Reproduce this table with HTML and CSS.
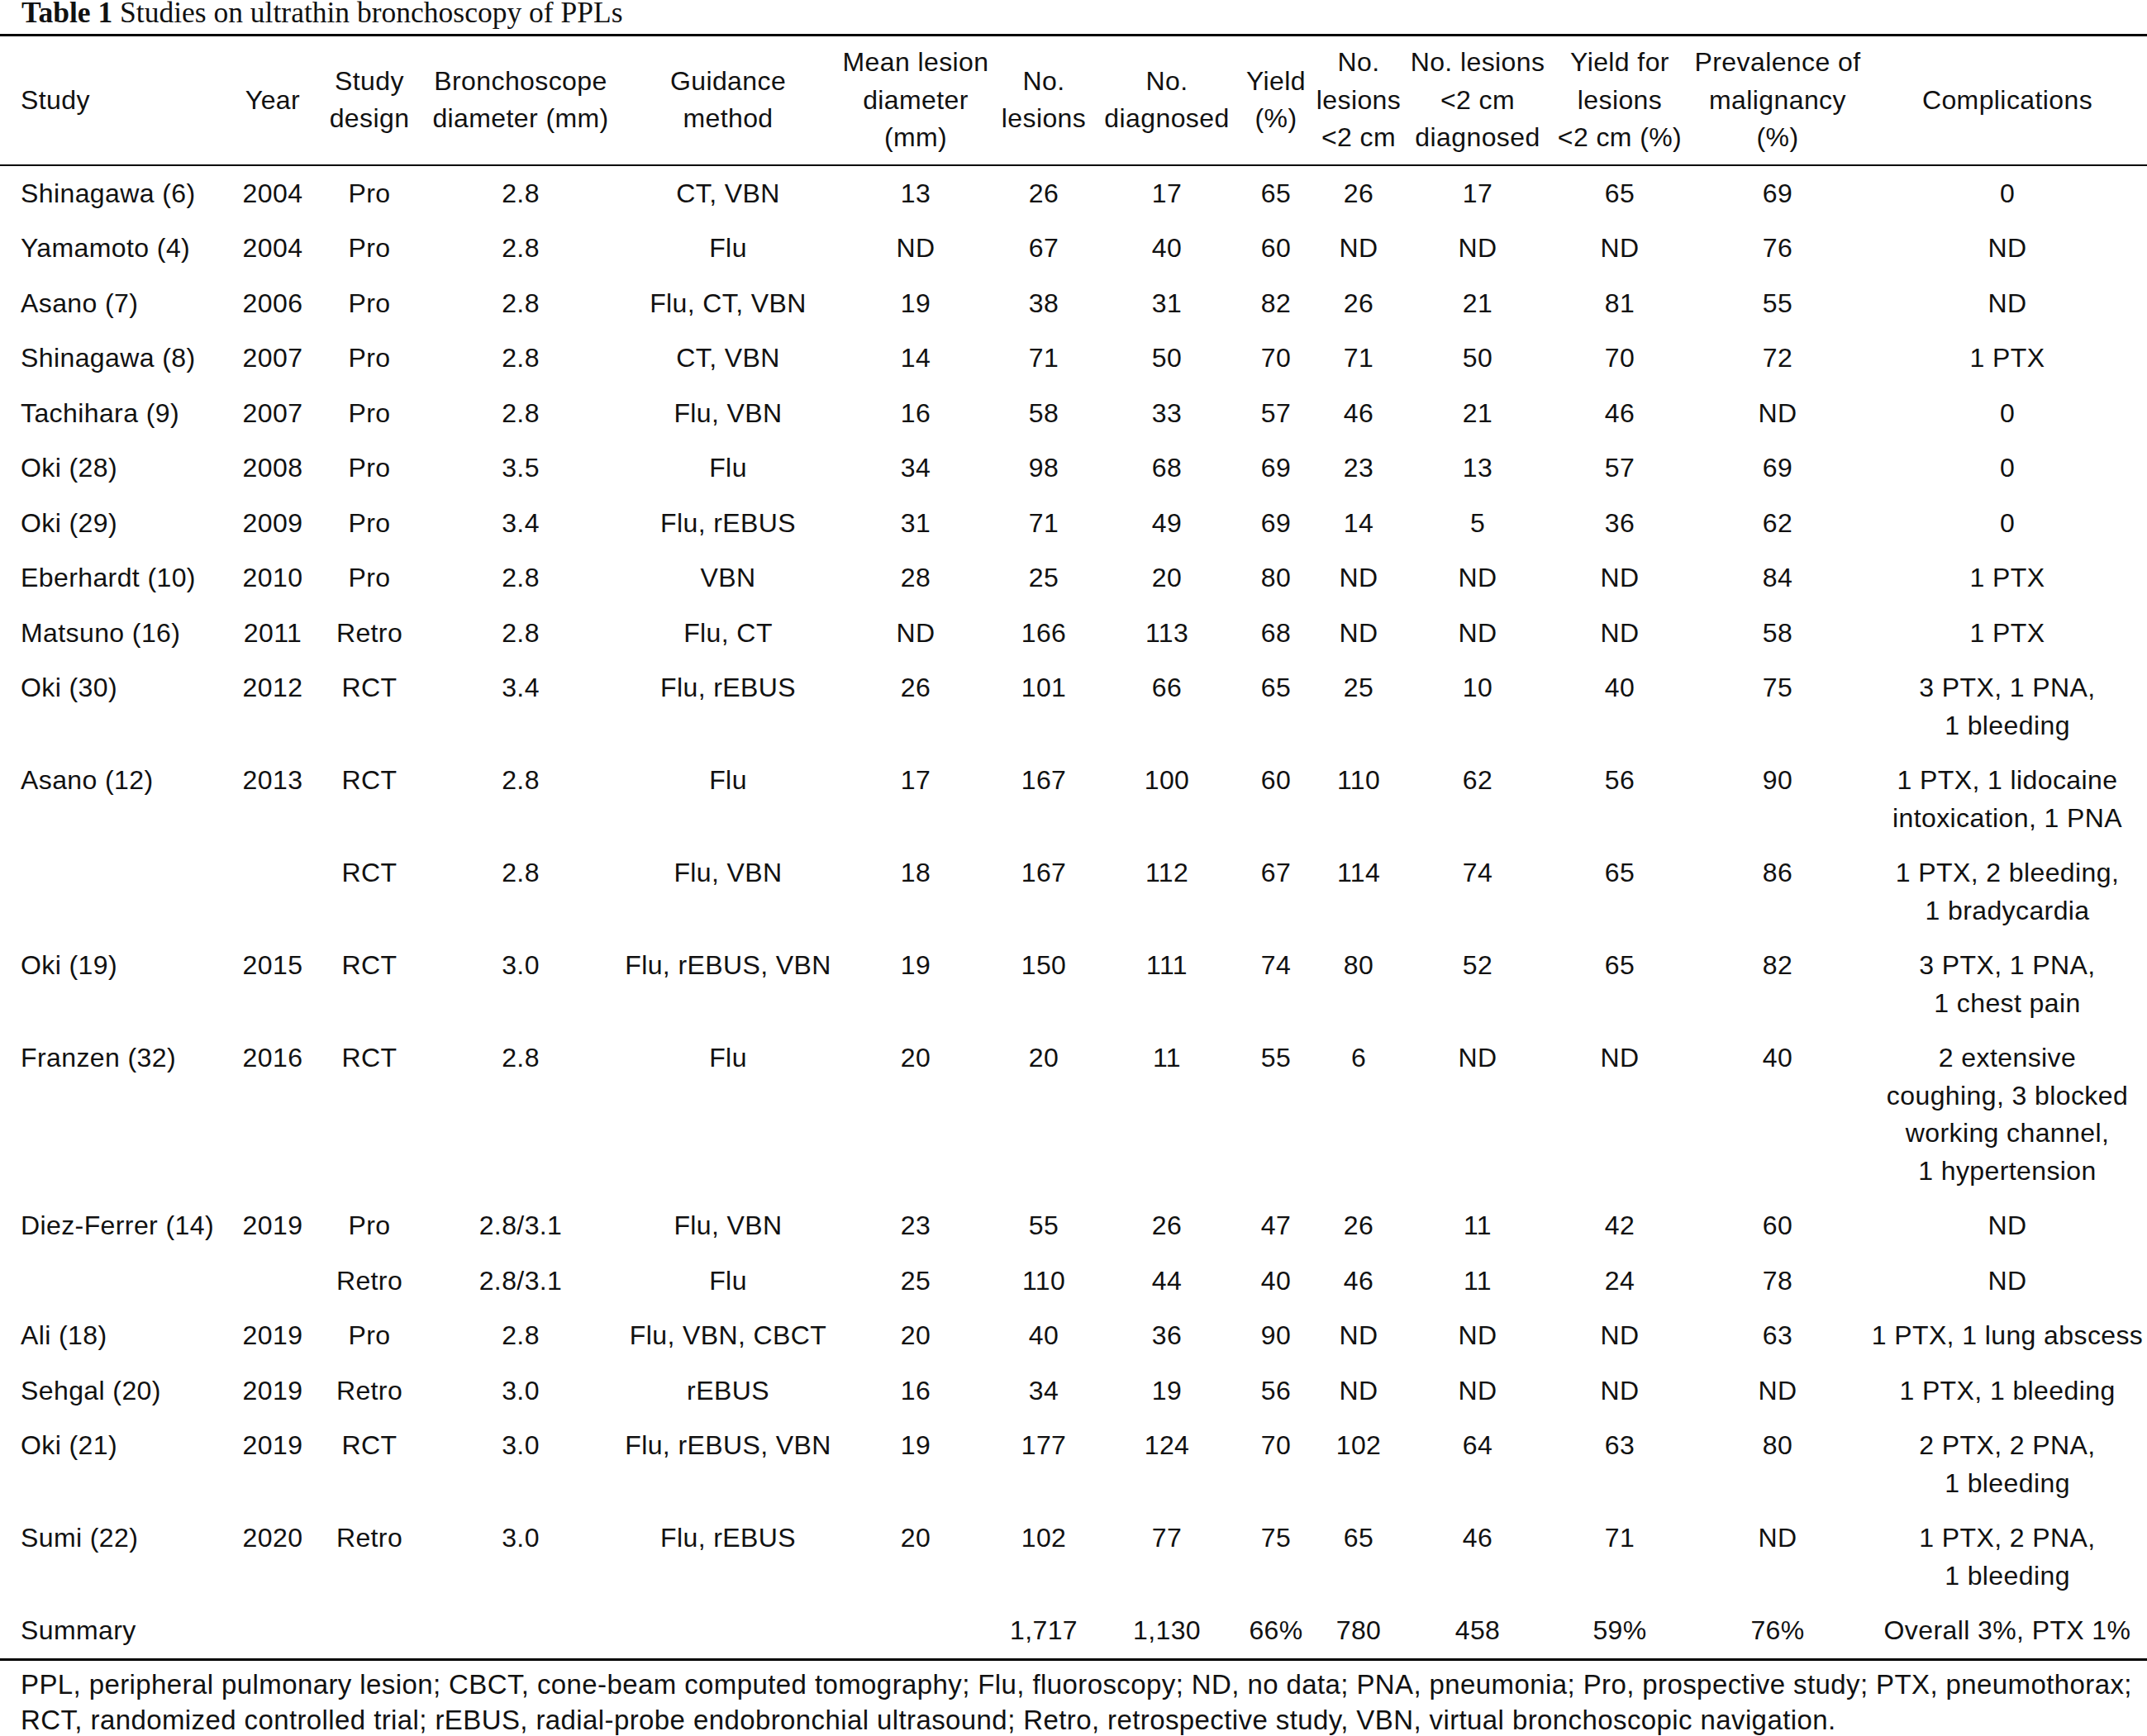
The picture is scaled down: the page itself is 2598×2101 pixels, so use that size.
FILE: index.html
```html
<!DOCTYPE html>
<html lang="en">
<head>
<meta charset="utf-8">
<title>Table 1 Studies on ultrathin bronchoscopy of PPLs</title>
<link rel="stylesheet" href="styles.css">
</head>
<body>
<div class="page">
  <div class="caption"><b>Table 1</b> Studies on ultrathin bronchoscopy of PPLs</div>
  <table class="data">
    <colgroup>
      <col class="c1"><col class="c2"><col class="c3"><col class="c4"><col class="c5"><col class="c6"><col class="c7"><col class="c8"><col class="c9"><col class="c10"><col class="c11"><col class="c12"><col class="c13"><col class="c14">
    </colgroup>
    <thead>
      <tr>
        <th class="left">Study</th>
        <th>Year</th>
        <th>Study<br>design</th>
        <th>Bronchoscope<br>diameter (mm)</th>
        <th>Guidance<br>method</th>
        <th>Mean lesion<br>diameter<br>(mm)</th>
        <th>No.<br>lesions</th>
        <th>No.<br>diagnosed</th>
        <th>Yield<br>(%)</th>
        <th>No.<br>lesions<br>&lt;2 cm</th>
        <th>No. lesions<br>&lt;2 cm<br>diagnosed</th>
        <th>Yield for<br>lesions<br>&lt;2 cm (%)</th>
        <th>Prevalence of<br>malignancy<br>(%)</th>
        <th>Complications</th>
      </tr>
    </thead>
    <tbody>
      <tr><td class="left">Shinagawa (6)</td><td>2004</td><td>Pro</td><td>2.8</td><td>CT, VBN</td><td>13</td><td>26</td><td>17</td><td>65</td><td>26</td><td>17</td><td>65</td><td>69</td><td>0</td></tr>
      <tr><td class="left">Yamamoto (4)</td><td>2004</td><td>Pro</td><td>2.8</td><td>Flu</td><td>ND</td><td>67</td><td>40</td><td>60</td><td>ND</td><td>ND</td><td>ND</td><td>76</td><td>ND</td></tr>
      <tr><td class="left">Asano (7)</td><td>2006</td><td>Pro</td><td>2.8</td><td>Flu, CT, VBN</td><td>19</td><td>38</td><td>31</td><td>82</td><td>26</td><td>21</td><td>81</td><td>55</td><td>ND</td></tr>
      <tr><td class="left">Shinagawa (8)</td><td>2007</td><td>Pro</td><td>2.8</td><td>CT, VBN</td><td>14</td><td>71</td><td>50</td><td>70</td><td>71</td><td>50</td><td>70</td><td>72</td><td>1 PTX</td></tr>
      <tr><td class="left">Tachihara (9)</td><td>2007</td><td>Pro</td><td>2.8</td><td>Flu, VBN</td><td>16</td><td>58</td><td>33</td><td>57</td><td>46</td><td>21</td><td>46</td><td>ND</td><td>0</td></tr>
      <tr><td class="left">Oki (28)</td><td>2008</td><td>Pro</td><td>3.5</td><td>Flu</td><td>34</td><td>98</td><td>68</td><td>69</td><td>23</td><td>13</td><td>57</td><td>69</td><td>0</td></tr>
      <tr><td class="left">Oki (29)</td><td>2009</td><td>Pro</td><td>3.4</td><td>Flu, rEBUS</td><td>31</td><td>71</td><td>49</td><td>69</td><td>14</td><td>5</td><td>36</td><td>62</td><td>0</td></tr>
      <tr><td class="left">Eberhardt (10)</td><td>2010</td><td>Pro</td><td>2.8</td><td>VBN</td><td>28</td><td>25</td><td>20</td><td>80</td><td>ND</td><td>ND</td><td>ND</td><td>84</td><td>1 PTX</td></tr>
      <tr><td class="left">Matsuno (16)</td><td>2011</td><td>Retro</td><td>2.8</td><td>Flu, CT</td><td>ND</td><td>166</td><td>113</td><td>68</td><td>ND</td><td>ND</td><td>ND</td><td>58</td><td>1 PTX</td></tr>
      <tr><td class="left">Oki (30)</td><td>2012</td><td>RCT</td><td>3.4</td><td>Flu, rEBUS</td><td>26</td><td>101</td><td>66</td><td>65</td><td>25</td><td>10</td><td>40</td><td>75</td><td>3 PTX, 1 PNA,<br>1 bleeding</td></tr>
      <tr><td class="left">Asano (12)</td><td>2013</td><td>RCT</td><td>2.8</td><td>Flu</td><td>17</td><td>167</td><td>100</td><td>60</td><td>110</td><td>62</td><td>56</td><td>90</td><td>1 PTX, 1 lidocaine<br>intoxication, 1 PNA</td></tr>
      <tr><td class="left"></td><td></td><td>RCT</td><td>2.8</td><td>Flu, VBN</td><td>18</td><td>167</td><td>112</td><td>67</td><td>114</td><td>74</td><td>65</td><td>86</td><td>1 PTX, 2 bleeding,<br>1 bradycardia</td></tr>
      <tr><td class="left">Oki (19)</td><td>2015</td><td>RCT</td><td>3.0</td><td>Flu, rEBUS, VBN</td><td>19</td><td>150</td><td>111</td><td>74</td><td>80</td><td>52</td><td>65</td><td>82</td><td>3 PTX, 1 PNA,<br>1 chest pain</td></tr>
      <tr><td class="left">Franzen (32)</td><td>2016</td><td>RCT</td><td>2.8</td><td>Flu</td><td>20</td><td>20</td><td>11</td><td>55</td><td>6</td><td>ND</td><td>ND</td><td>40</td><td>2 extensive<br>coughing, 3 blocked<br>working channel,<br>1 hypertension</td></tr>
      <tr><td class="left">Diez-Ferrer (14)</td><td>2019</td><td>Pro</td><td>2.8/3.1</td><td>Flu, VBN</td><td>23</td><td>55</td><td>26</td><td>47</td><td>26</td><td>11</td><td>42</td><td>60</td><td>ND</td></tr>
      <tr><td class="left"></td><td></td><td>Retro</td><td>2.8/3.1</td><td>Flu</td><td>25</td><td>110</td><td>44</td><td>40</td><td>46</td><td>11</td><td>24</td><td>78</td><td>ND</td></tr>
      <tr><td class="left">Ali (18)</td><td>2019</td><td>Pro</td><td>2.8</td><td>Flu, VBN, CBCT</td><td>20</td><td>40</td><td>36</td><td>90</td><td>ND</td><td>ND</td><td>ND</td><td>63</td><td>1 PTX, 1 lung abscess</td></tr>
      <tr><td class="left">Sehgal (20)</td><td>2019</td><td>Retro</td><td>3.0</td><td>rEBUS</td><td>16</td><td>34</td><td>19</td><td>56</td><td>ND</td><td>ND</td><td>ND</td><td>ND</td><td>1 PTX, 1 bleeding</td></tr>
      <tr><td class="left">Oki (21)</td><td>2019</td><td>RCT</td><td>3.0</td><td>Flu, rEBUS, VBN</td><td>19</td><td>177</td><td>124</td><td>70</td><td>102</td><td>64</td><td>63</td><td>80</td><td>2 PTX, 2 PNA,<br>1 bleeding</td></tr>
      <tr><td class="left">Sumi (22)</td><td>2020</td><td>Retro</td><td>3.0</td><td>Flu, rEBUS</td><td>20</td><td>102</td><td>77</td><td>75</td><td>65</td><td>46</td><td>71</td><td>ND</td><td>1 PTX, 2 PNA,<br>1 bleeding</td></tr>
      <tr class="summary"><td class="left">Summary</td><td></td><td></td><td></td><td></td><td></td><td>1,717</td><td>1,130</td><td>66%</td><td>780</td><td>458</td><td>59%</td><td>76%</td><td>Overall 3%, PTX 1%</td></tr>
    </tbody>
  </table>
  <div class="notes">
    <p>PPL, peripheral pulmonary lesion; CBCT, cone-beam computed tomography; Flu, fluoroscopy; ND, no data; PNA, pneumonia; Pro, prospective study; PTX, pneumothorax;</p>
    <p>RCT, randomized controlled trial; rEBUS, radial-probe endobronchial ultrasound; Retro, retrospective study, VBN, virtual bronchoscopic navigation.</p>
  </div>
</div>
</body>
</html>
```
FILE: styles.css
```css
html, body {
  margin: 0;
  padding: 0;
  background: #ffffff;
}
.page {
  width: 2598px;
  color: #111111;
  font-family: "Liberation Sans", Arial, Helvetica, sans-serif;
}
.caption {
  font-family: "Liberation Serif", "Times New Roman", serif;
  font-size: 35.5px;
  line-height: 30px;
  height: 30px;
  padding: 0 0 11px 26px;
  white-space: nowrap;
}
.caption b {
  font-weight: bold;
}
.data {
  width: 2598px;
  table-layout: fixed;
  border-collapse: collapse;
  font-size: 32px;
  letter-spacing: 0.4px;
  line-height: 45.5px;
}
.c1 { width: 280px; }
.c2 { width: 100px; }
.c3 { width: 134px; }
.c4 { width: 232px; }
.c5 { width: 270px; }
.c6 { width: 184px; }
.c7 { width: 126px; }
.c8 { width: 172px; }
.c9 { width: 92px; }
.c10 { width: 108px; }
.c11 { width: 180px; }
.c12 { width: 164px; }
.c13 { width: 218px; }
.c14 { width: 338px; }
.data thead tr {
  border-top: 3px solid #000;
  border-bottom: 2px solid #000;
}
.data th {
  font-weight: normal;
  text-align: center;
  vertical-align: middle;
  padding: 9px 0 9.5px 0;
  white-space: nowrap;
}
.data td {
  text-align: center;
  vertical-align: top;
  padding: 10.5px 0;
  white-space: nowrap;
}
.data th.left,
.data td.left {
  text-align: left;
  padding-left: 25px;
}
.data tr.summary {
  border-bottom: 3px solid #000;
}
.notes {
  padding: 7px 0 0 25px;
  font-size: 33px;
  letter-spacing: 0.4px;
  line-height: 43px;
}
.notes p {
  margin: 0;
  white-space: nowrap;
}
```
